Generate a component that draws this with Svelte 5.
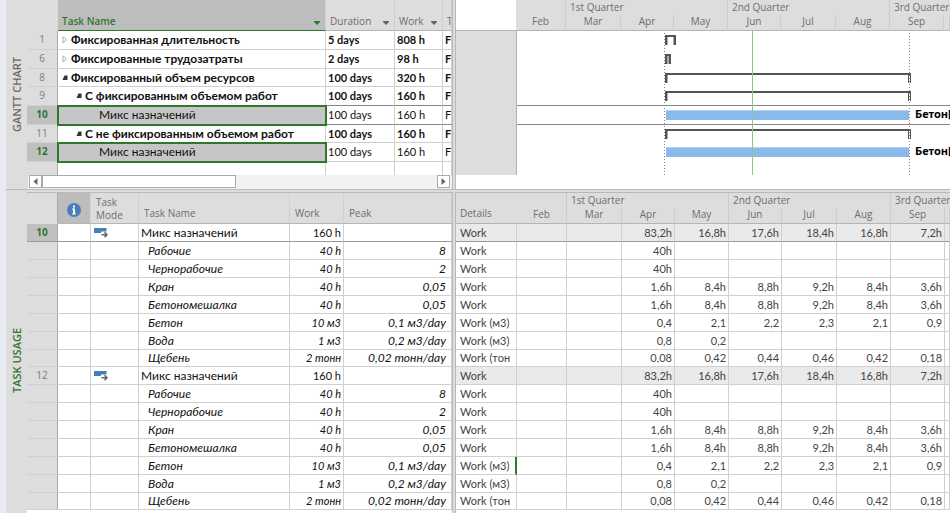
<script>
  const tasks = [
    { id: 1, name: 'Фиксированная длительность', days: '5 days', work: '808 h', level: 0, state: 'closed', kind: 'summary', from: 149, to: 160 },
    { id: 6, name: 'Фиксированные трудозатраты', days: '2 days', work: '98 h', level: 0, state: 'closed', kind: 'summary', from: 149, to: 155 },
    { id: 8, name: 'Фиксированный объем ресурсов', days: '100 days', work: '320 h', level: 0, state: 'open', kind: 'summary', from: 149, to: 395 },
    { id: 9, name: 'С фиксированным объемом работ', days: '100 days', work: '160 h', level: 1, state: 'open', kind: 'summary', from: 149, to: 395, line: true },
    { id: 10, name: 'Микс назначений', days: '100 days', work: '160 h', level: 2, kind: 'task', from: 150, to: 393, selected: true, line: true },
    { id: 11, name: 'С не фиксированным объемом работ', days: '100 days', work: '160 h', level: 1, state: 'open', kind: 'summary', from: 149, to: 395 },
    { id: 12, name: 'Микс назначений', days: '100 days', work: '160 h', level: 2, kind: 'task', from: 150, to: 393, selected: true }
  ];

  const resources = [
    { name: 'Рабочие', work: '40 h', peak: '8', detail: 'Work', values: ['', '', '40h', '', '', '', '', ''] },
    { name: 'Чернорабочие', work: '40 h', peak: '2', detail: 'Work', values: ['', '', '40h', '', '', '', '', ''] },
    { name: 'Кран', work: '40 h', peak: '0,05', detail: 'Work', values: ['', '', '1,6h', '8,4h', '8,8h', '9,2h', '8,4h', '3,6h'] },
    { name: 'Бетономешалка', work: '40 h', peak: '0,05', detail: 'Work', values: ['', '', '1,6h', '8,4h', '8,8h', '9,2h', '8,4h', '3,6h'] },
    { name: 'Бетон', work: '10 м3', peak: '0,1 м3/day', detail: 'Work (м3)', values: ['', '', '0,4', '2,1', '2,2', '2,3', '2,1', '0,9'] },
    { name: 'Вода', work: '1 м3', peak: '0,2 м3/day', detail: 'Work (м3)', values: ['', '', '0,8', '0,2', '', '', '', ''] },
    { name: 'Щебень', work: '2 тонн', peak: '0,02 тонн/day', detail: 'Work (тон', values: ['', '', '0,08', '0,42', '0,44', '0,46', '0,42', '0,18'] }
  ];

  const block = (id, current) => [
    { id, current, head: true, name: 'Микс назначений', work: '160 h', peak: '', detail: 'Work', values: ['', '', '83,2h', '16,8h', '17,6h', '18,4h', '16,8h', '7,2h'] },
    ...resources.map((r) => ({ ...r, cursor: !current && r.name === 'Бетон' }))
  ];
  const usage = [...block(10, true), ...block(12, false)];

  const months = ['Feb', 'Mar', 'Apr', 'May', 'Jun', 'Jul', 'Aug', 'Sep'];
  const quarterEnds = ['Feb', 'May', 'Aug'];
</script>

{#snippet timeCols()}
  <col class="c-first" /><col class="c50" /><col class="c55" /><col class="c53" /><col class="c54" />
  <col class="c53" /><col class="c55" /><col class="c54" /><col class="c54" /><col />
{/snippet}

{#snippet timeHead(label)}
  <thead>
    <tr class="quarters">
      <th rowspan="2" class="corner">{label}</th>
      <th class="tall"></th>
      <th colspan="3" class="tall">1st Quarter</th>
      <th colspan="3" class="tall">2nd Quarter</th>
      <th colspan="2">3rd Quarter</th>
    </tr>
    <tr class="months">
      {#each months as m}
        <th class:tall={quarterEnds.includes(m)}><span>{m}</span></th>
      {/each}
      <th></th>
    </tr>
  </thead>
{/snippet}

{#snippet filter(label, green)}
  <button class="filter" class:green aria-label={'Filter ' + label}>
    <svg width="6" height="4" viewBox="0 0 6 4"><path d="M0 0h6v1L3 4 0 1z" fill="currentColor" /></svg>
  </button>
{/snippet}

<main>
  <section class="pane top">
    <h2 class="side">GANTT CHART</h2>
    <div class="left">
      <div class="sheet">
        <table class="tasks">
          <colgroup><col class="c-num" /><col class="c-name" /><col class="c-dur" /><col class="c-work" /><col /></colgroup>
          <thead>
            <tr>
              <th class="num"></th>
              <th class="picked"><div class="hcell"><span>Task Name</span>{@render filter('Task Name', true)}</div></th>
              <th><div class="hcell"><span>Duration</span>{@render filter('Duration', false)}</div></th>
              <th><div class="hcell"><span>Work</span>{@render filter('Work', false)}</div></th>
              <th><div class="hcell"><span>T</span></div></th>
            </tr>
          </thead>
          <tbody>
            {#each tasks as t}
              <tr class:summary={t.kind === 'summary'} class:selected={t.selected} class:line={t.line}>
                <th class="num">{t.id}</th>
                <td class="name">
                  <div class="label l{t.level}">
                    {#if t.state}
                      <button class="twist" aria-label={t.state === 'open' ? 'Collapse' : 'Expand'}>
                        <svg width="6" height="8" viewBox="0 0 6 8">
                          {#if t.state === 'open'}
                            <path d="M2.500 1.500H5.500v4.500H.5z" fill="#333" />
                          {:else}
                            <path d="M1 .8v6L4.500 3.800z" fill="#fff" stroke="#999" stroke-width=".8" />
                          {/if}
                        </svg>
                      </button>
                    {/if}
                    <span>{t.name}</span>
                  </div>
                </td>
                <td>{t.days}</td>
                <td>{t.work}</td>
                <td>F</td>
              </tr>
            {/each}
            <tr class="rest"><th class="num"></th><td></td><td></td><td></td><td></td></tr>
          </tbody>
        </table>
      </div>
      <div class="scroll">
        <button aria-label="Scroll left"><svg width="5" height="7" viewBox="0 0 5 7"><path d="M4.500 0v7L.5 3.500z" fill="#666" /></svg></button>
        <div class="thumb"></div>
        <button class="end" aria-label="Scroll right"><svg width="5" height="7" viewBox="0 0 5 7"><path d="M.5 0v7l4-3.500z" fill="#666" /></svg></button>
      </div>
    </div>
    <div class="right">
      <table class="time gantt-head">
        <colgroup>{@render timeCols()}</colgroup>
        {@render timeHead('')}
      </table>
      <div class="gantt">
        <div class="blank"></div>
        <div class="chart">
          {#each tasks as t}
            <div class="lane" class:line={t.line}>
              <div class="bar {t.kind}" class:long={t.to - t.from > 20} style="left:{t.from - 1}px;width:{t.to - t.from}px"></div>
              {#if t.kind === 'task'}<span class="res">Бетон[</span>{/if}
            </div>
          {/each}
          <i class="dots start"></i>
          <i class="dots finish"></i>
          <i class="today"></i>
        </div>
      </div>
    </div>
  </section>

  <section class="pane bottom">
    <h2 class="side">TASK USAGE</h2>
    <div class="left">
      <table class="usage">
        <colgroup><col class="c-num" /><col class="c-info" /><col class="c-mode" /><col class="c-uname" /><col class="c-uwork" /><col /></colgroup>
        <thead>
          <tr>
            <th class="num"></th>
            <th class="info">
              <svg width="14" height="14" viewBox="0 0 14 14" role="img" aria-label="Indicators">
                <circle cx="7" cy="7" r="7" fill="#4a7ebb" />
                <path d="M6 2.500h2v2H6zM5 5.500h3v5h1v1H5v-1h1v-4H5z" fill="#fff" />
              </svg>
            </th>
            <th class="mode">Task<br />Mode</th>
            <th>Task Name</th>
            <th>Work</th>
            <th>Peak</th>
          </tr>
        </thead>
        <tbody>
          {#each usage as u}
            <tr class:head={u.head} class:current={u.current}>
              <th class="num">{u.id ?? ''}</th>
              <td></td>
              <td class="mode">
                {#if u.head}
                  <svg width="15" height="11" viewBox="0 0 15 11" role="img" aria-label="Auto scheduled">
                    <path d="M0 1h12.500v3.500H7V6H0z" fill="#4a7ebb" />
                    <path d="M7.500 7.700h5M10.500 5.200l2.500 2.500-2.500 2.500" fill="none" stroke="#666" stroke-width="1.500" />
                  </svg>
                {/if}
              </td>
              <td class="uname">{u.name}</td>
              <td class="r">{u.work}</td>
              <td class="r peak">{u.peak}</td>
            </tr>
          {/each}
        </tbody>
      </table>
    </div>
    <div class="right">
      <table class="time values">
        <colgroup>{@render timeCols()}</colgroup>
        {@render timeHead('Details')}
        <tbody>
          {#each usage as u}
            <tr class:head={u.head} class:current={u.current}>
              <td class="detail" class:cursor={u.cursor}>{u.detail}</td>
              {#each u.values as v}<td class="r">{v}</td>{/each}
              <td></td>
            </tr>
          {/each}
        </tbody>
      </table>
    </div>
  </section>
</main>

<style>
  :global(body) { margin: 0; background: #fff; overflow: hidden; }
  main {
    display: flex; flex-direction: column; min-height: 100vh; box-sizing: border-box;
    border-left: 6px solid #e8ecf1; font: 11px/16px Lato, "Noto Sans", sans-serif; color: #111;
  }
  main :global(*) { box-sizing: border-box; }
  .pane { display: flex; background: #ddd; }
  .top { border-bottom: 1px solid #b9b9b9; }
  .bottom { flex: 1; border-top: 2px solid #ddd; }
  .side {
    width: 21px; margin: 0; flex: none; writing-mode: vertical-rl; transform: rotate(180deg);
    text-align: center; font: 600 11px/21px "Open Sans", sans-serif; color: #6a6a6a;
  }
  .bottom .side { color: #31752f; text-align: right; padding-bottom: 136px; }
  .left { width: 426px; flex: none; border-right: 1px solid #b9b9b9; overflow: hidden; }
  .right { flex: 1; min-width: 0; margin-left: 2px; border-left: 1px solid #b9b9b9; overflow: hidden; background: #fff; }
  .bottom .left, .bottom .right { border-top: 1px solid #b9b9b9; background: #fff; }

  table { width: 100%; table-layout: fixed; border-collapse: separate; border-spacing: 0; }
  th, td { padding: 0; white-space: nowrap; overflow: hidden; text-align: left; border-right: 1px solid #d0d0d0; border-bottom: 1px solid #d0d0d0; }
  th { background: #ddd; font-weight: 400; }
  thead th { font: 10px/13px "Open Sans", sans-serif; color: #6e6e6e; border-bottom-color: #b5b5b5; }
  td { background: #fff; }
  .c-num { width: 31px; }
  .c-name { width: 268px; }
  .c-dur { width: 69px; }
  .c-work { width: 48px; }
  .c-info { width: 33px; }
  .c-mode { width: 48px; }
  .c-uname { width: 151px; }
  .c-uwork { width: 54px; }
  .c-first { width: 61px; }
  .gantt-head .c-first { width: 60px; }
  .c50 { width: 50px; }
  .c53 { width: 53px; }
  .c54 { width: 54px; }
  .c55 { width: 55px; }

  tbody td, tbody th { line-height: 16px; }
  .num { text-align: center; font-family: "Open Sans", sans-serif; color: #7b7b8a; border-right-color: #ababab; }
  tbody .num { font-size: 10px; vertical-align: top; }
  thead .num { border-bottom-color: #ddd; border-right-color: #ddd; }
  .tasks thead th { height: 31px; vertical-align: bottom; }
  .tasks thead .picked { background: #bdbdbd; color: #31752f; font-weight: 600; border-bottom-color: #31752f; }
  .hcell { display: flex; justify-content: space-between; padding: 0 5px 2px 4px; }
  .filter { border: 0; background: none; padding: 6px 0 0; height: 13px; display: flex; color: #666; }
  .filter.green { color: #31752f; }
  .tasks tbody tr, .lane { height: 19px; }
  .tasks tbody tr:nth-child(3n), .lane:nth-child(3n) { height: 18px; }
  .tasks tbody .rest { height: 13px; }
  .rest th, .rest td { border-bottom: 0; }
  .tasks td { padding-left: 2px; }
  .name, .uname, .peak { font-size: 12px; }
  .summary td { font-weight: 700; }
  .line td, .lane.line { border-bottom: 1px solid #888; }
  .selected .num, .current .num { background: #c0c0c0; color: #31752f; font-weight: 700; }
  .tasks .selected .name { background: #c6c6c6; position: relative; outline: 2px solid #31752f; outline-offset: -1px; }
  .label { display: flex; align-items: center; gap: 3px; padding-left: 2px; }
  .l1 { padding-left: 16px; }
  .l2 { padding-left: 39px; }
  .twist { border: 0; padding: 0; background: none; display: flex; }

  .scroll { display: flex; height: 14px; margin-left: 1px; background: #f2f2f2; padding: 0 2px 1px 1px; }
  .scroll button { width: 13px; border: 1px solid #aaa; background: #fff; padding: 0; display: flex; align-items: center; justify-content: center; }
  .scroll .end { margin-left: auto; }
  .thumb { width: 194px; border: 1px solid #aaa; background: #fff; }

  .time thead th { border-right: 0; }
  .time thead .quarters th { height: 15px; padding-left: 4px; border-bottom: 0; }
  .time thead .months th { height: 16px; text-align: center; vertical-align: top; border-right: 1px solid #ccc; }
  .time thead .tall { border-right: 1px solid #ccc; }
  .time thead .quarters .corner { background: #fff; border-bottom: 1px solid #b5b5b5; }
  .gantt { display: flex; height: 144px; margin-bottom: 14px; }
  .blank { width: 61px; background: #ddd; border-right: 1px solid #b0b0b0; flex: none; }
  .chart { position: relative; flex: 1; overflow: hidden; }
  .lane { position: relative; }
  .bar { position: absolute; top: 4px; height: 10px; }
  .bar.summary { border: solid #555; border-width: 2px 2px 0; }
  .bar.summary::before, .bar.summary::after { content: ""; position: absolute; left: 0; top: 0; width: 1px; height: 8px; background: #aaa; }
  .bar.summary::after { left: auto; right: 0; }
  .bar.long { border-right-width: 1px; }
  .bar.long::after { right: 1px; background: #555; }
  .bar.task { background: #8abaec; border-top: 1px solid #b4d3f3; }
  .res { position: absolute; left: 398px; top: 0; font: 700 11px/16px "Noto Sans", sans-serif; color: #000; }
  .dots { position: absolute; top: 2px; bottom: 0; width: 1px; background: repeating-linear-gradient(#888 0 1px, transparent 1px 3px); }
  .start { left: 147px; }
  .finish { left: 392px; }
  .today { position: absolute; top: 0; bottom: 0; left: 235px; width: 1px; background: #8cc68c; }

  .usage thead th { height: 31px; vertical-align: bottom; padding: 0 5px 3px; }
  .usage thead .num { border-right-color: #ababab; }
  .usage thead .mode { padding-bottom: 1px; }
  .usage thead .info { background: #bdbdbd; text-align: center; vertical-align: middle; padding: 0; }
  .info svg, .mode svg { display: block; }
  .info svg { margin: 4px auto 0; }
  .usage tbody tr, .values tbody tr { height: 18px; }
  .usage tbody tr:nth-child(8n), .values tbody tr:nth-child(8n) { height: 17px; }
  .usage td.mode { padding-left: 3px; }
  .usage td { font-style: italic; }
  .usage .head td { font-style: normal; }
  .uname { padding-left: 9px; }
  .head .uname { padding-left: 2px; }
  .r { text-align: right; padding-right: 2px; }
  .peak { padding-right: 5px; }
  .current td, .current .num { border-bottom-color: #999; }
  .values td { color: #444; }
  .values .head td { background: #eaeaea; }
  .values .detail { padding-left: 4px; }
  .values .cursor { border-right: 2px solid #31752f; }
  .values thead .quarters .corner { background: #ddd; vertical-align: bottom; padding-bottom: 3px; }
</style>
